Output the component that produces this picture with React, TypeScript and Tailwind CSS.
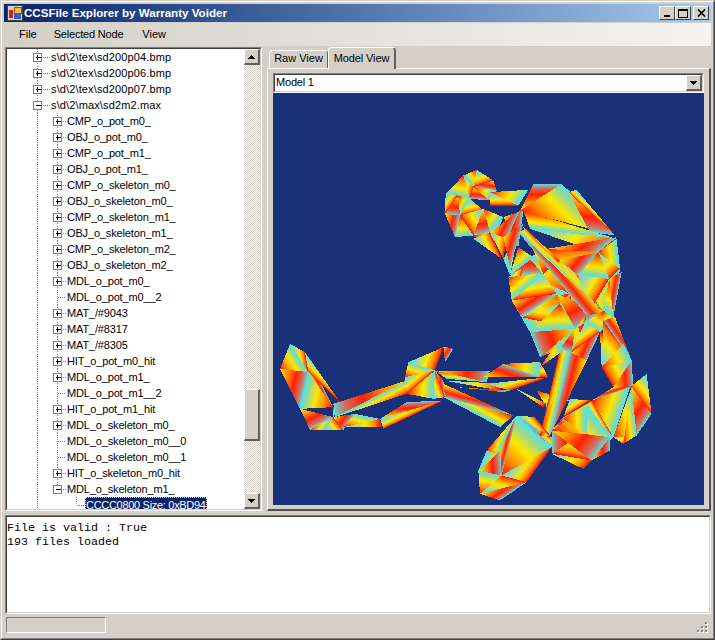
import React from "react";

const ui = "font-['Liberation_Sans',Arial,sans-serif]";

type Row = { label: string; depth: 1 | 2 | 3; kind: "plus" | "minus" | "leaf" };

const plus = (label: string, depth: 1 | 2 = 2): Row => ({ label, depth, kind: "plus" });
const leaf = (label: string): Row => ({ label, depth: 2, kind: "leaf" });

const rows: Row[] = [
  plus("s\\d\\2\\tex\\sd200p04.bmp", 1),
  plus("s\\d\\2\\tex\\sd200p06.bmp", 1),
  plus("s\\d\\2\\tex\\sd200p07.bmp", 1),
  { label: "s\\d\\2\\max\\sd2m2.max", depth: 1, kind: "minus" },
  plus("CMP_o_pot_m0_"),
  plus("OBJ_o_pot_m0_"),
  plus("CMP_o_pot_m1_"),
  plus("OBJ_o_pot_m1_"),
  plus("CMP_o_skeleton_m0_"),
  plus("OBJ_o_skeleton_m0_"),
  plus("CMP_o_skeleton_m1_"),
  plus("OBJ_o_skeleton_m1_"),
  plus("CMP_o_skeleton_m2_"),
  plus("OBJ_o_skeleton_m2_"),
  plus("MDL_o_pot_m0_"),
  leaf("MDL_o_pot_m0__2"),
  plus("MAT_/#9043"),
  plus("MAT_/#8317"),
  plus("MAT_/#8305"),
  plus("HIT_o_pot_m0_hit"),
  plus("MDL_o_pot_m1_"),
  leaf("MDL_o_pot_m1__2"),
  plus("HIT_o_pot_m1_hit"),
  plus("MDL_o_skeleton_m0_"),
  leaf("MDL_o_skeleton_m0__0"),
  leaf("MDL_o_skeleton_m0__1"),
  plus("HIT_o_skeleton_m0_hit"),
  { label: "MDL_o_skeleton_m1_", depth: 2, kind: "minus" },
  { label: "CCCC0800 Size: 0xBD94", depth: 3, kind: "leaf" },
];

// triangles in 3x crop coordinates, first vertex is the hot end of the gradient
const mesh: number[][] = [
  // backing fans so the body reads solid
  [900, 400, 720, 320, 830, 265], [900, 400, 830, 265, 1040, 235], [900, 400, 1040, 235, 1050, 325],
  [900, 400, 1050, 325, 1030, 470], [900, 400, 1030, 470, 1000, 480], [900, 400, 1000, 480, 950, 600],
  [900, 400, 950, 600, 870, 565], [900, 400, 870, 565, 810, 590], [900, 400, 810, 590, 780, 515],
  [900, 400, 780, 515, 725, 420], [900, 400, 725, 420, 720, 320],
  [740, 900, 630, 1000, 625, 930], [740, 900, 625, 930, 650, 870], [740, 900, 650, 870, 740, 765],
  [740, 900, 740, 765, 845, 830], [740, 900, 845, 830, 845, 860], [740, 900, 845, 860, 770, 965],
  [740, 900, 770, 965, 690, 1020], [740, 900, 690, 1020, 630, 1000],
  [950, 810, 845, 810, 965, 720], [950, 810, 965, 720, 1030, 830], [950, 810, 1030, 830, 965, 900],
  [950, 810, 965, 900, 845, 880], [950, 810, 845, 880, 845, 810],
  // fill under the body
  [610, 225, 700, 170, 660, 270], [660, 215, 720, 180, 700, 295], [700, 170, 760, 150, 745, 260],
  [745, 215, 700, 295, 720, 345], [760, 200, 870, 300, 820, 340], [745, 260, 820, 340, 720, 345],
  [835, 295, 1000, 455, 925, 345], [870, 300, 925, 345, 1000, 455], [860, 400, 915, 505, 1000, 455],
  [860, 400, 870, 430, 915, 505], [915, 505, 950, 465, 945, 485], [915, 505, 905, 575, 870, 565],
  [810, 590, 870, 565, 915, 505], [950, 740, 965, 720, 880, 770], [845, 810, 880, 770, 950, 740],
  [840, 825, 845, 860, 810, 825], [795, 770, 810, 825, 845, 830], [850, 810, 880, 775, 950, 820],
  [800, 690, 900, 720, 830, 740], [810, 605, 835, 650, 810, 650], [115, 635, 105, 575, 190, 740],
  [190, 740, 210, 725, 190, 770], [405, 650, 495, 630, 410, 700], [255, 760, 330, 775, 190, 770],
  [1000, 450, 1035, 470, 990, 515], [995, 620, 990, 515, 1060, 550], [1030, 680, 965, 720, 1085, 680],
  [1030, 830, 1100, 825, 1085, 680], [1030, 830, 1060, 850, 1100, 825], [875, 70, 895, 95, 1035, 225],
  // head
  [620, 28, 580, 45, 610, 80], [620, 28, 670, 60, 610, 80], [670, 60, 680, 90, 610, 80],
  [580, 45, 527, 100, 600, 115], [580, 45, 610, 80, 600, 115], [610, 80, 660, 120, 600, 115],
  [610, 80, 680, 90, 660, 120], [527, 100, 525, 160, 565, 105], [565, 105, 570, 165, 525, 160],
  [565, 105, 600, 115, 570, 165], [600, 115, 640, 150, 570, 165], [525, 160, 555, 230, 570, 165],
  [570, 165, 610, 225, 555, 230], [640, 145, 610, 225, 570, 165], [640, 145, 660, 215, 610, 225],
  [640, 145, 700, 170, 660, 215], [610, 235, 660, 215, 695, 295], [660, 215, 750, 150, 710, 235],
  [660, 95, 775, 88, 745, 135], [660, 95, 745, 135, 660, 135],
  // neck and chest
  [700, 230, 760, 190, 720, 320], [745, 260, 790, 290, 720, 345], [715, 350, 760, 320, 740, 400],
  // shoulder
  [750, 150, 790, 72, 875, 70], [750, 150, 875, 70, 1035, 225], [920, 88, 895, 95, 1035, 225],
  [895, 95, 1035, 225, 960, 215], [760, 150, 1040, 235, 780, 205], [780, 205, 1040, 235, 985, 275],
  [830, 265, 1040, 230, 985, 275],
  // back
  [985, 275, 1040, 235, 1050, 325], [985, 275, 1050, 325, 1018, 355], [870, 300, 985, 275, 925, 345],
  [985, 275, 1018, 355, 925, 345], [925, 345, 1018, 355, 960, 450], [1018, 355, 1055, 335, 1030, 470],
  [1018, 355, 1030, 470, 1000, 450],
  // torso
  [820, 340, 725, 420, 860, 400], [725, 420, 860, 400, 755, 470], [715, 350, 820, 340, 725, 420],
  [870, 430, 755, 470, 915, 505], [915, 505, 780, 515, 810, 590], [870, 430, 780, 515, 915, 505],
  // upper arm
  [745, 215, 770, 205, 1000, 455], [1000, 455, 745, 215, 950, 465], [770, 205, 835, 295, 1000, 455],
  // forearm
  [900, 575, 870, 565, 810, 825], [950, 600, 900, 575, 840, 825], [810, 825, 900, 575, 840, 825],
  [945, 485, 905, 575, 990, 515], [905, 575, 990, 515, 950, 600], [1000, 450, 945, 485, 990, 515],
  // far leg
  [995, 620, 1000, 480, 1060, 550], [1035, 470, 1000, 480, 1085, 600], [995, 620, 1060, 550, 1085, 600],
  [1085, 600, 995, 620, 1030, 680], [1030, 680, 1085, 600, 1090, 680],
  // far foot
  [965, 720, 1080, 680, 1030, 830], [1130, 640, 1080, 680, 1145, 760], [1085, 680, 1145, 760, 1100, 825],
  [1060, 850, 1100, 825, 1085, 680], [950, 740, 965, 720, 1030, 830],
  [845, 810, 965, 900, 1020, 830], [845, 810, 950, 740, 1030, 830], [845, 880, 965, 900, 940, 925],
  [965, 900, 1020, 870, 1020, 830], [880, 775, 950, 735, 950, 820], [900, 715, 960, 720, 880, 770],
  // hip
  [630, 930, 690, 870, 695, 945], [630, 1000, 695, 945, 625, 930], [630, 1000, 695, 945, 770, 965],
  [630, 1000, 770, 965, 690, 1020], [695, 945, 740, 765, 845, 860], [695, 945, 845, 860, 770, 965],
  [690, 870, 740, 765, 695, 945], [650, 870, 740, 765, 690, 870], [740, 765, 795, 770, 845, 830],
  // near shin
  [520, 670, 730, 765, 520, 710], [730, 765, 690, 800, 520, 710], [730, 680, 830, 730, 820, 740],
  // calf
  [410, 660, 190, 730, 195, 770], [410, 700, 410, 660, 195, 770], [330, 775, 520, 720, 340, 805],
  [330, 775, 410, 725, 520, 720],
  // knee
  [405, 650, 415, 605, 495, 630], [415, 605, 520, 560, 495, 630], [520, 558, 550, 565, 525, 605],
  [410, 700, 495, 630, 490, 715], [490, 715, 495, 630, 525, 710], [495, 630, 520, 660, 525, 710],
  // foot
  [30, 625, 60, 550, 115, 635], [60, 550, 105, 575, 115, 635], [30, 625, 115, 635, 90, 745],
  [190, 740, 115, 635, 90, 745], [105, 575, 210, 725, 115, 635], [90, 745, 190, 770, 120, 808],
  [120, 808, 190, 770, 165, 808], [165, 808, 190, 770, 220, 808], [190, 770, 255, 760, 220, 808],
  [220, 800, 255, 760, 330, 775], [220, 800, 330, 775, 335, 800],
  // hands
  [495, 630, 660, 630, 650, 665], [495, 630, 650, 665, 530, 655], [520, 660, 700, 670, 690, 690],
  [640, 650, 700, 610, 810, 650], [700, 610, 810, 605, 810, 650], [650, 670, 835, 650, 720, 690],
  [560, 680, 720, 690, 700, 695], [810, 620, 870, 535, 880, 570],
];

const stops = [0, 0.3, 0.6, 0.85, 1];
const ramps = [
  ["#ff1000", "#ff8c00", "#ffe800", "#98d890", "#48e4f0"],
  ["#48e4f0", "#a0d8a0", "#ffe800", "#ff8000", "#ff1000"],
  ["#ffe800", "#ff9000", "#ff2000", "#d07060", "#60d8d8"],
];

// foot of the perpendicular from the first vertex onto the opposite edge
const foot = ([ax, ay, bx, by, cx, cy]: number[]) => {
  const dx = cx - bx;
  const dy = cy - by;
  const k = ((ax - bx) * dx + (ay - by) * dy) / (dx * dx + dy * dy || 1);
  return [bx + dx * k, by + dy * k];
};

const Figure = () => (
  <svg viewBox="9 -201 1293 1233" className="block h-full w-full" shapeRendering="crispEdges">
    <defs>
      {mesh.map((t, i) => {
        const [x2, y2] = foot(t);
        return (
          <linearGradient key={i} id={`t${i}`} gradientUnits="userSpaceOnUse" x1={t[0]} y1={t[1]} x2={x2} y2={y2}>
            {ramps[i % 3].map((c, j) => (
              <stop key={j} offset={stops[j]} stopColor={c} />
            ))}
          </linearGradient>
        );
      })}
    </defs>
    {mesh.map((t, i) => (
      <polygon key={i} points={t.join(" ")} fill={`url(#t${i})`} />
    ))}
  </svg>
);

// expander box plus the dotted guide lines of one tree row
const Guides = ({ row, index }: { row: Row; index: number }) => {
  const width = row.depth === 1 ? 44 : row.depth === 2 ? 60 : 78;
  const boxX = row.depth === 1 ? 26.5 : 46.5;
  const dots = { stroke: "#808080", strokeWidth: 1, strokeDasharray: "1 1" };
  return (
    <svg width={width} height={16} className="shrink-0" shapeRendering="crispEdges">
      <line x1={30.5} y1={index % 2 ? 1 : 0} x2={30.5} y2={16} {...dots} />
      {index >= 4 && index <= 27 && (
        <line x1={50.5} y1={index % 2 ? 1 : 0} x2={50.5} y2={index === 27 ? 8 : 16} {...dots} />
      )}
      {row.depth === 1 && <line x1={36} y1={8.5} x2={43} y2={8.5} {...dots} />}
      {row.depth === 2 && <line x1={row.kind === "leaf" ? 51 : 56} y1={8.5} x2={59} y2={8.5} {...dots} />}
      {row.depth === 3 && (
        <>
          <line x1={69.5} y1={0} x2={69.5} y2={8} {...dots} />
          <line x1={70} y1={8.5} x2={78} y2={8.5} {...dots} />
        </>
      )}
      {row.kind !== "leaf" && (
        <>
          <rect x={boxX} y={4.5} width={8} height={8} fill="#fff" stroke="#808080" />
          <line x1={boxX + 2} y1={8.5} x2={boxX + 7} y2={8.5} stroke="#000" />
          {row.kind === "plus" && <line x1={boxX + 4} y1={6} x2={boxX + 4} y2={11} stroke="#000" />}
        </>
      )}
    </svg>
  );
};

const TreeRow = ({ row, index }: { row: Row; index: number }) => {
  let text = "whitespace-nowrap tracking-[-0.15px]";
  if (row.depth === 1) text = "whitespace-nowrap tracking-[0.13px]";
  if (row.depth === 3) {
    text =
      "flex h-4 items-center whitespace-nowrap bg-[#0a246a] pr-px pl-px tracking-[-0.3px] text-white outline-1 -outline-offset-1 outline-dotted outline-[#d4d0c8]";
  }
  return (
    <div className="flex h-4 items-center">
      <Guides row={row} index={index} />
      <span className={text}>{row.label}</span>
    </div>
  );
};

const ScrollButton = ({ up }: { up?: boolean }) => (
  <div className="flex h-4 w-4 shrink-0 items-center justify-center border-t border-l border-t-white border-l-white border-r-2 border-b-2 border-r-[#606060] border-b-[#606060] bg-[#d4d0c8]">
    <svg width="7" height="4" viewBox="0 0 7 4" shapeRendering="crispEdges">
      <polygon points={up ? "3.5,0 7,4 0,4" : "0,0 7,0 3.5,4"} fill="#000" />
    </svg>
  </div>
);

const Sunken = ({ className, children }: { className: string; children: React.ReactNode }) => (
  <div className={`border border-t-[#808080] border-l-[#808080] border-r-white border-b-white ${className}`}>
    <div className="h-full w-full border border-t-[#404040] border-l-[#404040] border-r-[#d4d0c8] border-b-[#d4d0c8] bg-white">
      {children}
    </div>
  </div>
);

const CaptionButton = ({ children, className }: { children: React.ReactNode; className: string }) => (
  <div className={`flex h-3.5 w-4 items-center justify-center border-t border-l border-t-white border-l-white border-r border-b border-r-[#404040] border-b-[#404040] bg-[#d4d0c8] ${className}`}>
    {children}
  </div>
);

export default function App() {
  return (
    <div className={`h-[640px] w-[715px] overflow-hidden border border-t-[#d4d0c8] border-l-[#d4d0c8] border-r-[#404040] border-b-[#404040] bg-[#d4d0c8] text-[11px] text-black ${ui}`}>
      <div className="h-full border border-t-white border-l-white border-r-[#808080] border-b-[#808080] p-0.5">
        <div className="flex h-full flex-col">
          {/* title bar */}
          <div className="flex h-[18px] shrink-0 items-center bg-gradient-to-r from-[#0a246a] to-[#a6caf0] pr-0.5 pl-[3px]">
            <svg width="16" height="16" viewBox="0 0 16 16" className="shrink-0" shapeRendering="crispEdges">
              <rect x="0.5" y="0.5" width="15" height="15" fill="#d4d0c8" stroke="#404040" />
              <rect x="7" y="2" width="7" height="6" fill="#f0c040" stroke="#806000" />
              <rect x="2" y="5" width="4" height="8" fill="#d02020" />
              <rect x="7" y="9" width="7" height="5" fill="#3060d0" />
            </svg>
            <span className="ml-[1px] text-[11.6px] font-bold whitespace-nowrap text-white">
              CCSFile Explorer by Warranty Voider
            </span>
            <div className="ml-auto flex">
              <CaptionButton className="items-end pb-0.5">
                <div className="h-0.5 w-1.5 bg-black" />
              </CaptionButton>
              <CaptionButton className="">
                <div className="h-[9px] w-[10px] border border-t-2 border-black" />
              </CaptionButton>
              <CaptionButton className="ml-0.5">
                <svg width="9" height="8" viewBox="0 0 9 8">
                  <path d="M1 0.5 L8 7.5 M8 0.5 L1 7.5" stroke="#000" strokeWidth="1.6" />
                </svg>
              </CaptionButton>
            </div>
          </div>

          {/* menu strip */}
          <div className="mt-px flex h-[23px] shrink-0 items-center bg-gradient-to-r from-[#d4d0c8] to-[#f4f3f1] pl-[15px]">
            <span>File</span>
            <span className="ml-[17px] tracking-[-0.2px]">Selected Node</span>
            <span className="ml-[19px]">View</span>
          </div>

          {/* main split */}
          <div className="mt-px flex h-[464px] shrink-0 pl-px">
            <Sunken className="h-[464px] w-[257px] shrink-0">
              <div className="flex h-full">
                <div className="min-w-0 flex-1 overflow-hidden">
                  {rows.map((row, i) => (
                    <TreeRow key={i} row={row} index={i} />
                  ))}
                </div>
                <div className="flex w-4 shrink-0 flex-col bg-[repeating-conic-gradient(#d4d0c8_0_25%,#ffffff_0_50%)] bg-[length:2px_2px]">
                  <ScrollButton up />
                  <div className="mt-[324px] h-[52px] border-t border-l border-t-white border-l-white border-r-2 border-b-2 border-r-[#606060] border-b-[#606060] bg-[#d4d0c8]" />
                  <div className="flex-1" />
                  <ScrollButton />
                </div>
              </div>
            </Sunken>

            {/* tab control */}
            <div className="ml-[5px] flex min-w-0 flex-1 flex-col">
              <div className="flex h-[21px] shrink-0 items-end pl-0.5">
                <div className="flex h-[18px] w-[59px] items-center justify-center rounded-t-sm border-t border-l border-t-white border-l-white border-r border-r-[#606060] pb-0.5">
                  Raw View
                </div>
                <div className="relative top-px z-10 flex h-[22px] w-[68px] items-center justify-center rounded-t-sm border-t border-l border-t-white border-l-white border-r-2 border-r-[#606060] bg-[#d4d0c8] tracking-[-0.1px]">
                  Model View
                </div>
              </div>
              <div className="flex-1 border-t border-l border-t-white border-l-white border-r-2 border-b-2 border-r-[#505050] border-b-[#505050] pt-1 pr-[5px] pb-1 pl-[5px]">
                <div className="flex h-full flex-col">
                  <Sunken className="h-5 shrink-0">
                    <div className="flex h-full items-center justify-between pl-px">
                      <span className="pb-0.5 tracking-[-0.2px]">Model 1</span>
                      <ScrollButton />
                    </div>
                  </Sunken>
                  <div className="min-h-0 flex-1 bg-[#19317a]">
                    <Figure />
                  </div>
                </div>
              </div>
            </div>
          </div>

          {/* log */}
          <Sunken className="mt-1 ml-px h-[99px] shrink-0">
            <div className="pt-1 font-['Liberation_Mono',monospace] text-[11.67px] leading-[14px] whitespace-pre">
              <div>File is valid : True</div>
              <div>193 files loaded</div>
            </div>
          </Sunken>

          {/* status strip */}
          <div className="relative flex min-h-0 flex-1 items-center pl-0.5">
            <div className="h-4 w-[100px] border border-t-[#808080] border-l-[#808080] border-r-white border-b-white" />
            <svg width="12" height="12" className="absolute right-0.5 bottom-0.5" shapeRendering="crispEdges">
              {[[8, 0], [4, 4], [8, 4], [0, 8], [4, 8], [8, 8]].map(([x, y], i) => (
                <g key={i}>
                  <rect x={x + 1} y={y + 1} width="2" height="2" fill="#fff" />
                  <rect x={x} y={y} width="2" height="2" fill="#808080" />
                </g>
              ))}
            </svg>
          </div>
        </div>
      </div>
    </div>
  );
}
